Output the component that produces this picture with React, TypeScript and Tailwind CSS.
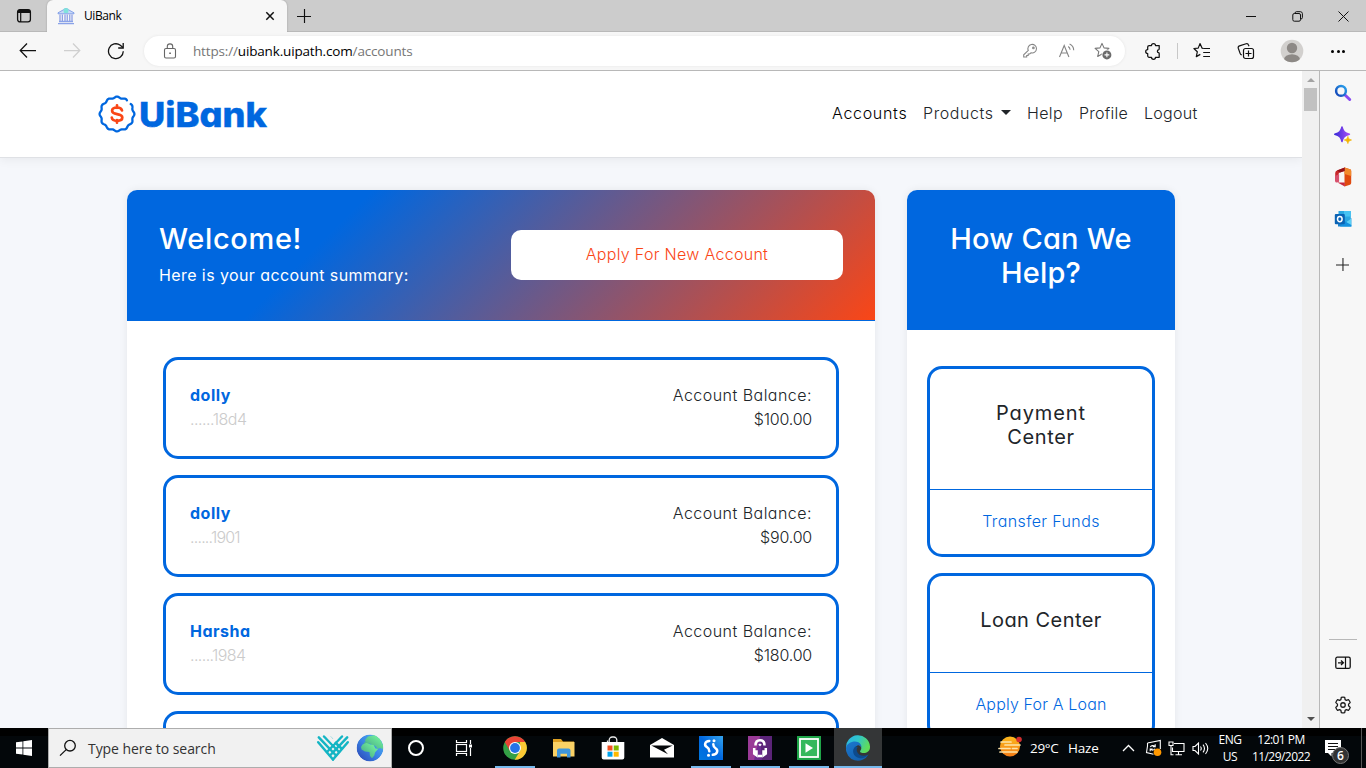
import React from "react";

type IconProps = { className?: string };

/* ---------- browser chrome icons ---------- */

const TabActions = () => (
  <svg width="16" height="16" viewBox="0 0 16 16" fill="none">
    <rect x="1.6" y="1.6" width="12.8" height="12.3" rx="2.4" stroke="#111" strokeWidth="1.3" />
    <path d="M1.6 5V4a2.4 2.4 0 0 1 2.4-2.4h8A2.4 2.4 0 0 1 14.400 4v1z" fill="#111" />
    <path d="M4.700 4v10" stroke="#111" strokeWidth="1.2" />
  </svg>
);

const BankIcon = () => (
  <svg width="18" height="18" viewBox="0 0 18 18" fill="none">
    <path d="M1 5.800 9 1.400l8 4.400v1H1z" fill="#c7d8f7" stroke="#7c9be6" strokeWidth=".9" />
    <rect x="6.700" y="1.200" width="4.600" height="4.800" rx="1" fill="#7fe3dc" />
    <path d="M3 7.500v6.500M5.300 7.500v6.500M8 7.500v6.500M10.200 7.500v6.500M12.800 7.500v6.500M15 7.500v6.500" stroke="#7c93e2" strokeWidth="1.100" />
    <path d="M2 14.500h14M1 16.600h16" stroke="#8aa2e8" strokeWidth="1.300" />
  </svg>
);

const CloseTab = () => (
  <svg width="10" height="10" viewBox="0 0 10 10">
    <path d="M1.300 1.300l7.400 7.400M8.700 1.300L1.300 8.700" stroke="#111" strokeWidth="1.500" />
  </svg>
);

const Plus = ({ className }: IconProps) => (
  <svg width="14" height="14" viewBox="0 0 14 14" className={className}>
    <path d="M7.500 0v14M0 7.500h14" stroke="currentColor" strokeWidth="1.150" />
  </svg>
);

const BackArrow = ({ className }: IconProps) => (
  <svg width="18" height="16" viewBox="0 0 18 16" fill="none" className={className}>
    <path d="M17 7.500H1.500M8 .5L1.200 7.500 8 14.500" stroke="currentColor" strokeWidth="1.250" />
  </svg>
);

const Reload = () => (
  <svg width="18" height="18" viewBox="0 0 18 18" fill="none">
    <path d="M16.300 9.300A7.400 7.400 0 1 1 13.300 3.200L16 5.400" stroke="#111" strokeWidth="1.300" />
    <path d="M16.200 1v5h-5" stroke="#111" strokeWidth="1.300" />
  </svg>
);

const Lock = () => (
  <svg width="14" height="16" viewBox="0 0 14 16" fill="none">
    <rect x="1.500" y="5.500" width="11" height="9.500" rx="1.500" stroke="#666" strokeWidth="1.100" />
    <path d="M4.300 5.500V3.600a2.700 2.700 0 0 1 5.400 0v1.900" stroke="#666" strokeWidth="1.100" />
    <rect x="6.300" y="9.500" width="1.500" height="1.500" fill="#555" />
  </svg>
);

const KeyIcon = () => (
  <svg width="16" height="16" viewBox="0 0 16 16" fill="none" stroke="#858585" strokeWidth="1.050">
    <path d="M5.300 7.500A4.300 4.300 0 1 1 8 9.800L6.700 11H5.200v1.500H3.700V14H.7v-2.200z" />
    <circle cx="10.400" cy="4.900" r=".8" />
  </svg>
);

const ReadAloud = () => (
  <svg width="18" height="16" viewBox="0 0 18 16" fill="none" stroke="#858585" strokeWidth="1.100">
    <path d="M1.500 14L6.200 2.500 10.900 14M3.100 10h6.200" />
    <path d="M10.200 3.500c1.300.9 1.800 2 1.900 3.300M11.600 1c2.700 1.300 4.100 3.500 4.100 6.300" />
  </svg>
);

const STAR = "M8 1.400l2 4.500 4.900.5-3.700 3.300 1.100 4.800L8 12.100l-4.300 2.400 1.100-4.800L1.100 6.400 6 5.900z";

const StarAdd = () => (
  <svg width="18" height="18" viewBox="0 0 18 18" fill="none">
    <path d={STAR} stroke="#777" strokeWidth="1.100" strokeLinejoin="round" />
    <circle cx="12.900" cy="12.900" r="5.300" fill="#fff" />
    <circle cx="12.900" cy="12.900" r="4.500" fill="#6b6b6b" />
    <path d="M12.900 10.500v4.800M10.500 12.900h4.800" stroke="#fff" strokeWidth="1.100" />
  </svg>
);

const Puzzle = () => (
  <svg width="18" height="18" viewBox="0 0 18 18" fill="none">
    <path
      d="M5.200 3.500h2.300a2 2 0 0 1 4 0h3.700v3.300a1 1 0 0 1-.7 1c-1.500.1-1.500 2.700 0 2.800a1 1 0 0 1 .7 1v3.700h-3.700a2 2 0 0 1-4 0H5.200a1.500 1.500 0 0 1-1.500-1.500v-2.300a2 2 0 0 1 0-4V5a1.500 1.500 0 0 1 1.500-1.500z"
      stroke="#111"
      strokeWidth="1.250"
      strokeLinejoin="round"
    />
  </svg>
);

const Favorites = () => (
  <svg width="18" height="18" viewBox="0 0 18 18" fill="none" stroke="#111" strokeWidth="1.200">
    <path d="M10.400 6.500L9 6.100 7 1.600 5.200 6.100.9 6.500l3.400 3.300-1 4.800L7.300 12.400" strokeLinejoin="round" />
    <path d="M10.200 6.500H17M10.200 10.500H17M10.200 14.500H17" />
  </svg>
);

const Collections = () => (
  <svg width="18" height="18" viewBox="0 0 18 18" fill="none" stroke="#111" strokeWidth="1.200">
    <rect x="6.500" y="6.500" width="10" height="10" rx="2" />
    <path d="M11.500 8.500v6M8.500 11.500h6" />
    <path d="M12 4.300l-.5-1.300a1.900 1.900 0 0 0-2.400-1.200L2.500 3.900A1.900 1.900 0 0 0 1.300 6.300l1.900 5.300a2 2 0 0 0 1.600 1.300" />
  </svg>
);

const Avatar = () => (
  <svg width="24" height="24" viewBox="0 0 24 24">
    <defs>
      <clipPath id="avatar-clip">
        <circle cx="12" cy="12" r="11.300" />
      </clipPath>
    </defs>
    <circle cx="12" cy="12" r="11.300" fill="#d2d0ce" />
    <g clipPath="url(#avatar-clip)" fill="#8d8986">
      <circle cx="12" cy="9" r="5.200" />
      <ellipse cx="12" cy="20.500" rx="8" ry="5.200" />
    </g>
  </svg>
);

/* ---------- edge sidebar icons ---------- */

const SearchColor = () => (
  <svg width="18" height="18" viewBox="0 0 18 18" fill="none">
    <defs>
      <linearGradient id="lens" x1="0" y1="1" x2="1" y2="0">
        <stop offset="0" stopColor="#1241b5" />
        <stop offset="1" stopColor="#2ba4ee" />
      </linearGradient>
    </defs>
    <path d="M11 11l4.700 4.500" stroke="#8a4af0" strokeWidth="3" strokeLinecap="round" />
    <circle cx="7" cy="6.900" r="4.900" stroke="url(#lens)" strokeWidth="2.500" />
  </svg>
);

const Sparkle = () => (
  <svg width="18" height="18" viewBox="0 0 18 18">
    <defs>
      <linearGradient id="spark" x1="0" y1="0" x2="1" y2="0">
        <stop offset="0" stopColor="#3a2bd8" />
        <stop offset="1" stopColor="#a54df7" />
      </linearGradient>
    </defs>
    <path d="M8 .9c1 4.300 2.500 6 7.400 7.300C10.500 9.600 9 11.300 8 15.600 7 11.300 5.500 9.600.8 8.200 5.500 6.900 7 5.200 8 .9z" fill="url(#spark)" stroke="url(#spark)" strokeWidth="1.500" strokeLinejoin="round" />
    <path d="M13.900 10.400c.5 2.300 1.100 3 3.600 3.600-2.500.6-3.100 1.300-3.600 3.600-.5-2.300-1.100-3-3.600-3.600 2.500-.6 3.100-1.300 3.600-3.600z" fill="#f4b400" stroke="#f4b400" strokeWidth=".7" />
  </svg>
);

const Office = () => (
  <svg width="18" height="20" viewBox="0 0 18 20">
    <path d="M11 .6L3.500 3.200A3 3 0 0 0 1.200 6v8.200l3.300 1V7.300a2 2 0 0 1 1.400-1.800L11 3.800z" fill="#c8282a" />
    <path d="M1.200 9v5.200a1.500 1.500 0 0 0 1.900 1.300l2-1V7z" fill="#d8506e" />
    <path d="M10.500.5L16 2.300c.8.300 1.200.8 1.200 1.600v12.200c0 .8-.4 1.300-1.200 1.600L10.500 19.500z" fill="#e04a10" />
    <path d="M10.500.5L16 2.300c.8.300 1.200.8 1.200 1.600V9l-6.700-2z" fill="#f28a2c" />
    <path d="M3.500 15.500l7.300-.1v4.100z" fill="#c9283f" />
    <path d="M3 3.500L10.700.5v3.400L6 5.500z" fill="#93121a" />
  </svg>
);

const Outlook = () => (
  <svg width="18" height="18" viewBox="0 0 18 18">
    <path d="M4.500 1h12.300v11H4.500z" fill="#2aa7e2" />
    <path d="M10 1h6.800v5.500H10z" fill="#46c3f3" />
    <path d="M4 9l7 4 6.300-5v8.500H4z" fill="#1a84cf" />
    <path d="M9 14.500l8.300-6.300v8.300H9z" fill="#5cd0f6" />
    <path d="M10.500 11l6.800 4v1.500H6z" fill="#1490df" />
    <rect x=".8" y="4" width="10" height="10.200" rx="1" fill="#0a63b4" />
    <ellipse cx="5.800" cy="9.100" rx="2.300" ry="2.600" fill="none" stroke="#fff" strokeWidth="1.500" />
  </svg>
);

const HideSidebar = () => (
  <svg width="16" height="14" viewBox="0 0 16 14" fill="none" stroke="#111">
    <rect x=".8" y="1.200" width="14.400" height="11.200" rx="1.500" strokeWidth="1.300" />
    <path d="M10.500 1v11.500" strokeWidth="1.200" />
    <path d="M3 6.800h5.300M6 4.500l2.400 2.300L6 9" strokeWidth="1.300" />
  </svg>
);

const Gear = () => (
  <svg width="18" height="18" viewBox="0 0 24 24" fill="none" stroke="#1b1b1b" strokeWidth="1.700" strokeLinejoin="round">
    <path d="M9.700 1.900a10.300 10.300 0 0 1 4.600 0l.5 2.900 1.700 1 2.800-1a10.300 10.300 0 0 1 2.300 4L19.400 10.800v2.200l2.200 2.200a10.300 10.300 0 0 1-2.300 4l-2.800-1-1.700 1-.5 2.900a10.300 10.300 0 0 1-4.600 0l-.5-2.900-1.700-1-2.800 1a10.300 10.300 0 0 1-2.300-4L4.600 13v-2.200L2.400 8.800a10.300 10.300 0 0 1 2.300-4l2.800 1 1.700-1z" />
    <circle cx="12" cy="12" r="3" />
  </svg>
);

/* ---------- site logo ---------- */

const scallop = (() => {
  const pts: string[] = [];
  for (let i = 0; i <= 150; i++) {
    const a = ((-36 + (i / 150) * 342) * Math.PI) / 180;
    const r = 16.700 + 0.700 * Math.cos(12 * a);
    pts.push(`${(19 + r * Math.cos(a)).toFixed(2)} ${(19 + r * Math.sin(a)).toFixed(2)}`);
  }
  return "M" + pts.join("L");
})();

const SiteLogo = () => (
  <svg width="172" height="42" viewBox="0 0 172 42">
    <path d={scallop} fill="none" stroke="#0067df" strokeWidth="2.300" strokeLinecap="round" />
    <path d="M19 10.300v2.500M19 25.200v2.500M24 15.500c-.4-1.800-2.200-3-4.900-3-3 0-5 1.200-5 3.300 0 2.300 2 2.800 5 3.300s5.200 1.200 5.200 3.400c0 2.100-2.200 3.300-5.200 3.300-3.100 0-5-1.200-5.300-3.200" fill="none" stroke="#fa4616" strokeWidth="2.700" strokeLinecap="round" />
    <text x="41" y="32" fontFamily="Inter, sans-serif" fontWeight="800" fontSize="34.500" fill="#0067df" stroke="#0067df" strokeWidth=".4" textLength="128" lengthAdjust="spacingAndGlyphs">
      UiBank
    </text>
  </svg>
);

/* ---------- taskbar icons ---------- */

const WindowsLogo = () => (
  <svg width="16" height="16" viewBox="0 0 16 16" fill="#fff">
    <path d="M0 2.300L6.500 1.400V7.500H0zM7.300 1.300L16 0v7.500H7.300zM0 8.400h6.500v6.200L0 13.700zM7.300 8.400H16V16l-8.700-1.300z" />
  </svg>
);

const SearchGlyph = () => (
  <svg width="18" height="18" viewBox="0 0 18 18" fill="none" stroke="#111" strokeWidth="1.300">
    <circle cx="11" cy="6.700" r="5.300" />
    <path d="M7.200 10.600L1 16.600" />
  </svg>
);

const GivingHeart = () => (
  <svg width="34" height="28" viewBox="0 0 34 28" fill="none" stroke="#14b5c4" strokeWidth="2.500" strokeLinecap="round">
    <path d="M2.200 8.300L17 25.500M2.800 3.300L20 21.500M8 2.500L23 18M25.500 14.500L14 3.500" />
    <path d="M31.800 8.300L17 25.500M31.200 3.300L14 21.500M26 2.500L11 18" />
    <path d="M13.300 3.500L17 7.500l3.700-4" stroke="#f1f1f1" strokeWidth="3.500" />
  </svg>
);

const Globe = () => (
  <svg width="28" height="28" viewBox="0 0 28 28">
    <defs>
      <linearGradient id="sea" x1="0" y1="1" x2="1" y2="0">
        <stop offset="0" stopColor="#2b3fb0" />
        <stop offset=".5" stopColor="#3a86e6" />
        <stop offset="1" stopColor="#58b8f5" />
      </linearGradient>
      <linearGradient id="land" x1="0" y1="1" x2="1" y2="0">
        <stop offset="0" stopColor="#3e9f83" />
        <stop offset="1" stopColor="#7dffa0" />
      </linearGradient>
      <clipPath id="globe-clip">
        <circle cx="14" cy="14" r="13.400" />
      </clipPath>
    </defs>
    <g clipPath="url(#globe-clip)">
      <circle cx="14" cy="14" r="13.400" fill="url(#sea)" />
      <path d="M9 6l3-3.500L19 1l5 4 3 6v4l-3-1-2.500 1-2-3-3.500-1-2-1.500-2 .5-3.500.5-1-1.500 2-1z" fill="url(#land)" />
      <path d="M5 13l1.500-2.500 4-1.500 4 1.500 3 .5 2 3.500 2.500.5-3 3.500-.7 3-2.300 2.700-2-2.200-.5-4-4.500-.5-3.500-2z" fill="url(#land)" />
    </g>
  </svg>
);

const TaskView = () => (
  <svg width="18" height="18" viewBox="0 0 18 18" fill="none" stroke="#fff" strokeWidth="1.200">
    <path d="M1.500 1v2.500h10V1M1.500 17v-2.500h10V17" />
    <rect x="1.500" y="5.500" width="10" height="7" />
    <path d="M15.500 1v4M15.500 9v8" />
    <path d="M14 5.500h3v3h-3z" fill="#fff" stroke="none" />
  </svg>
);

const ChromeIcon = () => (
  <svg width="24" height="24" viewBox="0 0 24 24">
    <circle cx="12" cy="12" r="11.800" fill="#34a046" />
    <path d="M1.800 6A11.800 11.800 0 0 1 22.200 6H12L7 15z" fill="#ea4335" />
    <path d="M22.200 6.100A11.800 11.800 0 0 1 11.700 23.800l5.500-9L17 6.100z" fill="#fcc934" />
    <circle cx="12" cy="12" r="6" fill="#fff" />
    <circle cx="12" cy="12" r="4.900" fill="#2473e8" />
  </svg>
);

const Explorer = () => (
  <svg width="24" height="22" viewBox="0 0 24 22">
    <path d="M1 2h8l2 2.500h11V8H1z" fill="#dfa022" />
    <path d="M1 5h21.500v14.500H1z" fill="#fad165" />
    <path d="M5 20.500v-7a2 2 0 0 1 2-2h9.500a2 2 0 0 1 2 2v7H15v-3.800H8.500v3.800z" fill="#3f96dc" />
  </svg>
);

const Store = () => (
  <svg width="24" height="24" viewBox="0 0 24 24">
    <path d="M8.200 7V4a3 3 0 0 1 3-3h1.600a3 3 0 0 1 3 3v3M6.500 7V4.500" fill="none" stroke="#e8e8e8" strokeWidth="1.300" />
    <path d="M.7 6h22.600v15.500a2 2 0 0 1-2 2H2.700a2 2 0 0 1-2-2z" fill="#fff" />
    <path d="M6.500 9.500h5v5h-5z" fill="#f25022" />
    <path d="M12.700 9.500h5v5h-5z" fill="#7fba00" />
    <path d="M6.500 15.700h5v5h-5z" fill="#00a4ef" />
    <path d="M12.700 15.700h5v5h-5z" fill="#ffb900" />
  </svg>
);

const MailIcon = () => (
  <svg width="24" height="20" viewBox="0 0 24 20">
    <path d="M0 7L12 0l12 7v12.500H0z" fill="#fff" />
    <path d="M1.300 7.500h21.400L14 11.700l4 4.500z" fill="#05080b" />
  </svg>
);

const SApp = () => (
  <svg width="24" height="24" viewBox="0 0 24 24">
    <defs>
      <linearGradient id="sapp" x1="0" y1="1" x2="1" y2="0">
        <stop offset="0" stopColor="#0078e0" />
        <stop offset=".5" stopColor="#0067df" />
        <stop offset="1" stopColor="#36a5ee" />
      </linearGradient>
    </defs>
    <rect width="24" height="24" fill="url(#sapp)" />
    <path d="M10.300 4.900C5.500 5.200 5 9.500 8 11.200c1.700 1 2.300 1.600 2.300 4M14.300 8.300c0 2.300.6 2.900 2.200 3.900 3 1.900 2 6.300-2.700 6.600" fill="none" stroke="#fff" strokeWidth="2.500" strokeLinecap="round" />
    <circle cx="15" cy="4.800" r="1.500" fill="#fff" />
    <circle cx="9.500" cy="19.200" r="1.500" fill="#fff" />
  </svg>
);

const PurpleApp = () => (
  <svg width="24" height="24" viewBox="0 0 24 24">
    <rect width="24" height="24" fill="#6f2c91" />
    <path d="M12 0h12v24H14z" fill="#5b2478" />
    <path d="M0 0h12l-6 24H0z" fill="#9a3a97" />
    <path d="M7.500 9.500C7.500 6 9.300 4.300 12 4.300s4.500 1.700 4.500 5.200M6.200 12v5.500l2.300 1.700v-5M17.800 12v5.500l-2.300 1.700v-5M10 20h4" fill="none" stroke="#fff" strokeWidth="2.500" />
    <path d="M12 7.500l1.800 1.300L12 10.200l-1.800-1.400z" fill="#fff" />
  </svg>
);

const GreenApp = () => (
  <svg width="24" height="24" viewBox="0 0 24 24">
    <rect width="24" height="24" fill="#1fa548" />
    <rect x="3" y="3" width="18" height="18" fill="#35b85c" stroke="#fff" strokeWidth="1.800" />
    <path d="M8.500 7.300l7.500 4.700-7.500 4.700z" fill="#fff" />
  </svg>
);

const EdgeIcon = () => (
  <svg width="26" height="26" viewBox="0 0 26 26">
    <defs>
      <linearGradient id="edge-top" x1="0" y1="0" x2="1" y2=".4">
        <stop offset="0" stopColor="#2bb4e8" />
        <stop offset=".5" stopColor="#2fc5cb" />
        <stop offset="1" stopColor="#5fdc5a" />
      </linearGradient>
      <linearGradient id="edge-low" x1="0" y1="0" x2=".6" y2="1">
        <stop offset="0" stopColor="#1b78cf" />
        <stop offset="1" stopColor="#1460ad" />
      </linearGradient>
    </defs>
    <path d="M1 13A12 12 0 0 1 25 11.500c.2 4.300-3 6.500-6.500 6.500-2.500 0-4.300-.8-3-2.500 2.200-3-.5-6-3.500-6C6 9.500 2 12 1 17z" fill="url(#edge-top)" />
    <path d="M1 13c.3-4 5-6.500 9-6.500 4.500 0 7 3.500 6.500 6.500-.3-2-2.500-3-4-2.500-5 2-3 10 3.500 11 3 .5 5.500-.5 7.500-2A12 12 0 0 1 1 13z" fill="url(#edge-low)" />
    <path d="M10.500 11.500c-4 2.500-3.300 10.500 4.500 11.700 3 .4 6-.8 8.300-3.400-5 2-10 .8-11.300-3.300-.5-1.700-.2-3.500.8-4.600z" fill="#0d4a8c" />
  </svg>
);

const HazeIcon = () => (
  <svg width="26" height="24" viewBox="0 0 26 24">
    <defs>
      <linearGradient id="sun" x1="0" y1="0" x2="0" y2="1">
        <stop offset="0" stopColor="#fcb81c" />
        <stop offset="1" stopColor="#f47b16" />
      </linearGradient>
    </defs>
    <circle cx="13" cy="10.500" r="10" fill="url(#sun)" />
    <path d="M4 6h10M8 9h15M2 12.500h11M15.500 12.500H20M3 16h17" stroke="#fde3a8" strokeWidth="1.700" strokeLinecap="round" />
    <circle cx="22" cy="3.500" r="2.800" fill="#d32f2f" />
  </svg>
);

const UpdateTray = () => (
  <svg width="18" height="18" viewBox="0 0 18 18" fill="none" stroke="#fff">
    <path d="M3.500 4L16.300 1.500V10M3.500 4v3L2.500 13.500l7 1.800" strokeWidth="1.100" />
    <path d="M6.300 8c1-1.600 3.200-1.800 4.400-.7M11.200 5.200v2.400H8.800M11 9.700c-1 1.600-3 1.800-4.400.7M6.200 12.200V10h2.400" strokeWidth="1.100" />
    <circle cx="13.500" cy="13.300" r="3.800" fill="#ff9800" stroke="none" />
  </svg>
);

const Network = () => (
  <svg width="17" height="15" viewBox="0 0 17 15" fill="none" stroke="#fff" strokeWidth="1.100">
    <path d="M6 2.500h10v8H4.500V6.500M10.500 10.500v3M7.500 13.800h6.500" />
    <path d="M1 1h4v3.500H1zM3 4.500v9.300h2.500" />
  </svg>
);

const Volume = () => (
  <svg width="17" height="15" viewBox="0 0 17 15" fill="none" stroke="#fff" strokeWidth="1.100">
    <path d="M1 5.500h2L6.500 2v11L3 9.500H1z" />
    <path d="M8.500 5.500c.9 1.200.9 2.800 0 4M11 3.700c1.800 2.300 1.800 5.300 0 7.600M13.500 2c2.700 3.300 2.700 7.700 0 11" />
  </svg>
);

const Notifications = () => (
  <svg width="26" height="28" viewBox="0 0 26 28">
    <path d="M1 2h16v13H7.500v3.500L4 15H1z" fill="#fff" />
    <path d="M4 5.500h10M4 8.500h10M4 11.500h7" stroke="#111" strokeWidth="1.100" />
    <circle cx="16.500" cy="17.500" r="8" fill="#333" stroke="#777" strokeWidth="1" />
    <text x="16.500" y="21.800" textAnchor="middle" fontSize="12" fill="#fff" fontFamily="Open Sans, sans-serif" fontWeight="600">
      6
    </text>
  </svg>
);

/* ---------- sections ---------- */

const TabStrip = () => (
  <div className="flex h-8 shrink-0 items-stretch bg-[#cccccc] shadow-[inset_0_-1px_0_#b9b9b9]">
    <div className="flex w-[47px] items-center justify-center"><TabActions /></div>
    <div className="flex w-[240px] items-center rounded-t-md bg-[#f7f7f7] pl-[10px] shadow-[0_0_2px_#999]">
      <BankIcon />
      <span className="ml-[9px] flex-1 text-[12px] tracking-[-0.400px] text-black">UiBank</span>
      <span className="mr-3"><CloseTab /></span>
    </div>
    <div className="flex w-[34px] items-center justify-center text-[#111]"><Plus /></div>
    <div className="flex-1" />
    <div className="flex items-center">
      <span className="flex w-[46px] justify-center">
        <svg width="10" height="10"><path d="M0 5.500h10" stroke="#111" /></svg>
      </span>
      <span className="flex w-[46px] justify-center">
        <svg width="11" height="11" viewBox="0 0 11 11" fill="none" stroke="#111">
          <rect x=".8" y="2.500" width="7.700" height="7.700" rx="1.500" />
          <path d="M3 2.500V2A1.500 1.500 0 0 1 4.500.7h4A2 2 0 0 1 10.400 2.500v4A1.500 1.500 0 0 1 9 8" />
        </svg>
      </span>
      <span className="flex w-[46px] justify-center">
        <svg width="11" height="11"><path d="M.5.500l10 10M10.500.500l-10 10" stroke="#111" /></svg>
      </span>
    </div>
  </div>
);

const AddressBar = () => (
  <div className="flex h-[39px] shrink-0 items-center border-b border-[#b8b8b8] bg-[#f7f7f7]">
    <div className="flex w-[144px] items-center pl-[6px]">
      <span className="flex w-11 justify-center text-[#111]"><BackArrow /></span>
      <span className="flex w-11 justify-center text-[#cfcfcf]"><BackArrow className="-scale-x-100" /></span>
      <span className="flex w-11 justify-center"><Reload /></span>
    </div>
    <div className="flex h-[30px] w-[981px] items-center rounded-full bg-white pl-[19px] pr-[4px] shadow-[0_0_3px_#e4e4e4]">
      <Lock />
      <span className="ml-4 flex-1 text-[13.500px] tracking-[-0.160px] text-[#767676]">
        https://<span className="text-black">uibank.uipath.com</span>/accounts
      </span>
      <span className="flex w-9 justify-center"><KeyIcon /></span>
      <span className="flex w-9 justify-center"><ReadAloud /></span>
      <span className="flex w-9 justify-center"><StarAdd /></span>
    </div>
    <div className="flex items-center">
      <span className="flex w-[56px] justify-center"><Puzzle /></span>
      <span className="-ml-[4px] h-4 w-px bg-[#c8c8c8]" />
      <span className="flex w-[48px] justify-center"><Favorites /></span>
      <span className="flex w-[40px] justify-center"><Collections /></span>
      <span className="flex w-[52px] justify-center"><Avatar /></span>
      <span className="flex w-[40px] items-center justify-center gap-[2.500px]">
        <i className="size-[3px] rounded-full bg-black" />
        <i className="size-[3px] rounded-full bg-black" />
        <i className="size-[3px] rounded-full bg-black" />
      </span>
    </div>
  </div>
);

const SiteNav = () => (
  <nav className="flex h-[87px] shrink-0 items-center justify-between border-b border-[#dfe1e5] bg-white pl-[98px] pr-[104px] text-[16px] font-[330] text-[#212529] shadow-[0_2px_10px_rgba(0,0,0,0.06)]">
    <div className="pt-[3px]"><SiteLogo /></div>
    <div className="flex gap-4 pb-[3px]">
      <span className="w-[75px] whitespace-nowrap font-[350] tracking-[0.700px] text-black">Accounts</span>
      <span className="flex w-[88px] items-center justify-between whitespace-nowrap tracking-[0.580px]">
        Products
        <span className="border-x-[5px] border-t-[5px] border-x-transparent border-t-[#212529]" />
      </span>
      <span className="w-9 whitespace-nowrap tracking-[0.350px]">Help</span>
      <span className="w-[49px] whitespace-nowrap tracking-[0.230px]">Profile</span>
      <span className="w-[54px] whitespace-nowrap tracking-[0.300px]">Logout</span>
    </div>
  </nav>
);

const accounts = [
  { name: "dolly", number: "......18d4", balance: "$100.00", nameFit: "tracking-[0.500px]", numberFit: "tracking-[-0.500px]" },
  { name: "dolly", number: "......1901", balance: "$90.00", nameFit: "tracking-[0.500px]", numberFit: "tracking-[-0.800px]" },
  { name: "Harsha", number: "......1984", balance: "$180.00", nameFit: "tracking-[0.500px]", numberFit: "tracking-[-0.600px]" },
];

const AccountSummary = () => (
  <section className="w-[748px] self-start rounded-[10px] bg-white shadow-[0_0_8px_rgba(0,0,0,0.07)]">
    <header className="flex h-[131px] items-start justify-between rounded-t-[10px] border-b border-[#0067df] bg-[linear-gradient(135deg,#0067df_28%,#fa4616_100%)] px-8 pt-8 text-white">
      <div>
        <h1 className="text-[29px] leading-[34px] font-medium tracking-[0.650px]">Welcome!</h1>
        <p className="mt-[7px] text-[16px] leading-6 font-normal tracking-[0.410px]">Here is your account summary:</p>
      </div>
      <button className="mt-2 h-[50px] w-[332px] rounded-[10px] bg-white pb-[2px] text-[16px] font-[330] tracking-[0.300px] text-[#fa4616]">
        Apply For New Account
      </button>
    </header>
    <div className="flex flex-col gap-4 px-9 pt-9">
      {accounts.map((a, i) => (
        <article key={i} className="flex h-[102px] justify-between rounded-[15px] border-[3px] border-[#0067df] px-6 pt-[23px] text-[16px] leading-6 font-[330] text-[#212529]">
          <div>
            <div className={"font-bold text-[#0067df] " + a.nameFit}>{a.name}</div>
            <div className={"text-[#cbcbcb] " + a.numberFit}>{a.number}</div>
          </div>
          <div className="text-right">
            <div className="tracking-[0.470px]">Account Balance:</div>
            <div className="tracking-[-0.200px]">{a.balance}</div>
          </div>
        </article>
      ))}
      <article className="h-[102px] rounded-[15px] border-[3px] border-[#0067df]" />
    </div>
  </section>
);

const HelpCard = ({ title, action, fit }: { title: React.ReactNode; action: string; fit: string }) => (
  <article className="rounded-[15px] border-[3px] border-[#0067df] text-center">
    <h3 className="border-b border-[#0067df] px-7 pt-8 pb-10 text-[20px] leading-6 font-[430] text-[#212529]">{title}</h3>
    <p className={"pt-[19px] pb-[21px] text-[16px] leading-6 font-[330] text-[#0067df] " + fit}>{action}</p>
  </article>
);

const HelpPanel = () => (
  <aside className="w-[268px] self-start rounded-[10px] bg-white shadow-[0_0_8px_rgba(0,0,0,0.07)]">
    <header className="h-[140px] rounded-t-[10px] bg-[#0067df] pt-8 text-center text-[29px] leading-[34px] font-medium tracking-[0.200px] text-white">
      How Can We<br />Help?
    </header>
    <div className="flex flex-col gap-4 px-5 pt-9">
      <HelpCard
        title={<><span className="tracking-[0.900px]">Payment</span><br /><span className="tracking-[0.650px]">Center</span></>}
        action="Transfer Funds"
        fit="tracking-[0.380px]"
      />
      <HelpCard title={<span className="tracking-[0.450px]">Loan Center</span>} action="Apply For A Loan" fit="tracking-[0.160px]" />
    </div>
  </aside>
);

const PageScrollbar = () => (
  <div className="flex w-[17px] shrink-0 flex-col items-center border-[#f0f0f0] bg-[#f0f0f0] py-[7px]">
    <span className="border-x-4 border-b-4 border-x-transparent border-b-[#a3a3a3]" />
    <span className="mt-[6px] h-[23px] w-[13px] bg-[#c1c1c1]" />
    <span className="mt-auto border-x-4 border-t-4 border-x-transparent border-t-[#505050]" />
  </div>
);

const Sidebar = () => (
  <aside className="flex w-[47px] shrink-0 flex-col items-center border-l border-[#b8b8b8] bg-[#f7f7f7] pt-px">
    <span className="flex h-[42px] items-center"><SearchColor /></span>
    <span className="flex h-[42px] items-center"><Sparkle /></span>
    <span className="flex h-[42px] items-center"><Office /></span>
    <span className="flex h-[42px] items-center"><Outlook /></span>
    <span className="mt-[3px] mr-[2px] flex h-[42px] items-center text-[#222]"><Plus className="size-[13px]" /></span>
    <span className="mt-auto h-px w-7 bg-[#b8b8b8]" />
    <span className="mt-[2px] flex h-[42px] items-center"><HideSidebar /></span>
    <span className="mb-[2px] flex h-[42px] items-center"><Gear /></span>
  </aside>
);

const apps = [
  { icon: <ChromeIcon />, open: true },
  { icon: <Explorer />, open: false },
  { icon: <Store />, open: false },
  { icon: <MailIcon />, open: false },
  { icon: <SApp />, open: true },
  { icon: <PurpleApp />, open: true },
  { icon: <GreenApp />, open: true },
];

const Taskbar = () => (
  <footer className="flex h-10 shrink-0 items-stretch bg-[linear-gradient(#000_0_8px,#03070a_8px)] text-[12px] text-white">
    <div className="flex w-12 items-center justify-center"><WindowsLogo /></div>
    <div className="flex w-[344px] items-center border border-[#adadad] bg-[#f1f1f1] pr-[7px] pl-[10px] text-[#333]">
      <SearchGlyph />
      <span className="ml-[11px] flex-1 text-[14px] tracking-[-0.060px]">Type here to search</span>
      <GivingHeart />
      <span className="ml-[6px]"><Globe /></span>
    </div>
    <div className="flex w-12 items-center justify-center">
      <i className="size-4 rounded-full border-[2.500px] border-white" />
    </div>
    <div className="flex w-12 items-center justify-center"><TaskView /></div>
    <div className="ml-[7px] flex gap-[9px]">
      {apps.map((a, i) => (
        <div key={i} className={"flex w-10 items-center justify-center border-b-2 pt-[2px] " + (a.open ? "border-[#76b9ed]" : "border-transparent")}>
          {a.icon}
        </div>
      ))}
    </div>
    <div className="ml-[5px] flex w-12 items-center justify-center border-b-2 border-[#76b9ed] bg-[#343637] pt-[2px]"><EdgeIcon /></div>
    <div className="flex-1" />
    <div className="flex items-center">
      <HazeIcon />
      <span className="ml-[7px] w-[38px] text-[13.500px] tracking-[-0.300px]">29°C</span>
      <span className="w-[54px] text-[13.500px] tracking-[-0.200px]">Haze</span>
      <svg width="13" height="8" viewBox="0 0 13 8" fill="none"><path d="M1 7l5.500-5.500L12 7" stroke="#fff" strokeWidth="1.300" /></svg>
      <span className="ml-[9px]"><UpdateTray /></span>
      <span className="ml-[6px]"><Network /></span>
      <span className="ml-[7px]"><Volume /></span>
    </div>
    <div className="ml-2 flex w-[26px] flex-col items-center justify-center leading-[17px] tracking-[-0.500px]">
      <span>ENG</span>
      <span>US</span>
    </div>
    <div className="ml-[5px] flex w-[66px] flex-col items-center justify-center leading-[17px] whitespace-nowrap tracking-[-0.550px]">
      <span>12:01 PM</span>
      <span>11/29/2022</span>
    </div>
    <div className="ml-2 flex w-[39px] items-center pl-[2px] pt-[7px]"><Notifications /></div>
    <div className="w-[5px] border-l border-[#555]" />
  </footer>
);

export default function App() {
  return (
    <div className="flex h-[768px] w-[1366px] flex-col overflow-hidden font-['Open_Sans','Noto_Sans',sans-serif]">
      <TabStrip />
      <AddressBar />
      <div className="flex min-h-0 flex-1">
        <main className="flex min-w-0 flex-1 flex-col overflow-hidden bg-[#f5f7fb] font-['Inter',sans-serif] [font-feature-settings:'cv11']">
          <SiteNav />
          <div className="flex gap-8 pt-8 pl-[127px]">
            <AccountSummary />
            <HelpPanel />
          </div>
        </main>
        <PageScrollbar />
        <Sidebar />
      </div>
      <Taskbar />
    </div>
  );
}
